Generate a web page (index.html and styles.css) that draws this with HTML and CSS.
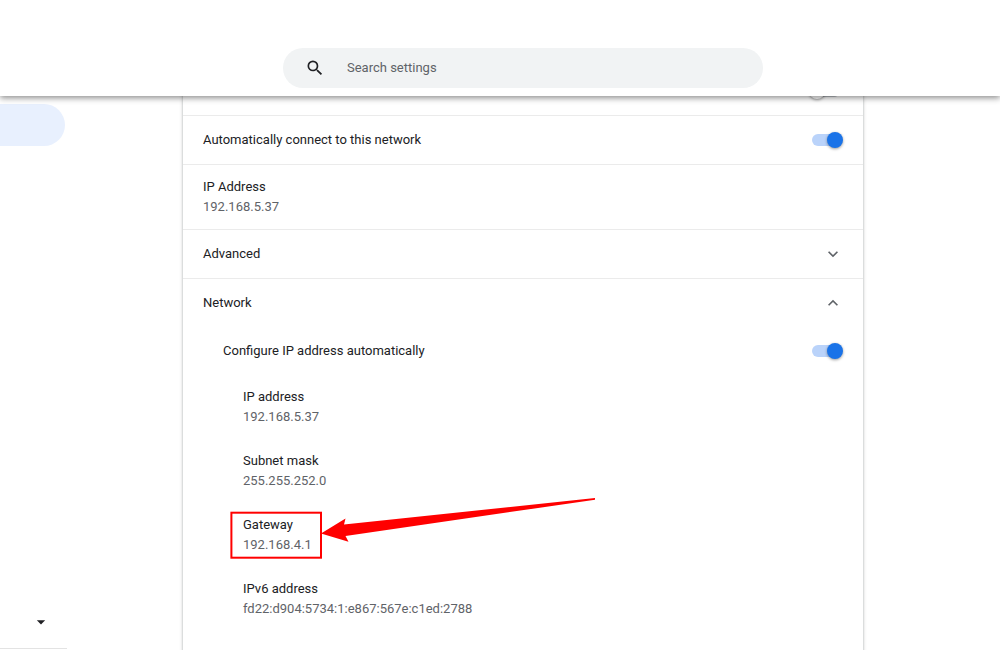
FILE: index.html
```html
<!DOCTYPE html>
<html lang="en">
<head>
    <meta charset="UTF-8">
    <meta name="viewport" content="width=device-width, initial-scale=1.0">
    <title>Settings</title>
    <link rel="stylesheet" href="styles.css">
</head>
<body>
    <header class="toolbar">
        <label class="search">
            <svg class="icon" viewBox="0 0 24 24" aria-hidden="true"><path d="M15.5 14h-.79l-.28-.27A6.47 6.47 0 0 0 16 9.5 6.5 6.5 0 1 0 9.5 16c1.61 0 3.09-.59 4.23-1.57l.27.28v.79l5 4.99L20.49 19l-4.99-5zm-6 0C7.01 14 5 11.99 5 9.5S7.01 5 9.5 5 14 7.01 14 9.5 11.99 14 9.5 14z"/></svg>
            <input type="search" placeholder="Search settings" aria-label="Search settings">
        </label>
    </header>

    <div class="container">
        <nav class="menu">
            <a class="menu-item" href="#network" aria-label="Network"></a>
            <button class="menu-toggle" aria-label="Show more">
                <svg class="icon" viewBox="0 0 24 24" aria-hidden="true"><path d="M7 10l5 5 5-5z"/></svg>
            </button>
        </nav>

        <main class="content">
            <section class="card" id="network">
                <div class="row">
                    <input class="toggle" type="checkbox" aria-label="Prefer this network">
                </div>
                <div class="row line">
                    <label for="auto-connect">Automatically connect to this network</label>
                    <input class="toggle" type="checkbox" id="auto-connect" checked>
                </div>
                <div class="row line two-line">
                    <div>
                        <div>IP Address</div>
                        <div class="secondary">192.168.5.37</div>
                    </div>
                </div>
                <button class="row line">
                    <span>Advanced</span>
                    <svg class="icon chevron" viewBox="0 0 24 24" aria-hidden="true"><path d="M7.41 8.59L12 13.17l4.59-4.58L18 10l-6 6-6-6z"/></svg>
                </button>
                <button class="row line" aria-expanded="true">
                    <span>Network</span>
                    <svg class="icon chevron" viewBox="0 0 24 24" aria-hidden="true"><path d="M7.41 15.41L12 10.83l4.59 4.58L18 14l-6-6-6 6z"/></svg>
                </button>
                <div class="row indent">
                    <label for="auto-ip">Configure IP address automatically</label>
                    <input class="toggle" type="checkbox" id="auto-ip" checked>
                </div>
                <div class="row two-line indent-more">
                    <div>
                        <div>IP address</div>
                        <div class="secondary">192.168.5.37</div>
                    </div>
                </div>
                <div class="row two-line indent-more">
                    <div>
                        <div>Subnet mask</div>
                        <div class="secondary">255.255.252.0</div>
                    </div>
                </div>
                <div class="row two-line indent-more">
                    <div>
                        <div>Gateway</div>
                        <div class="secondary">192.168.4.1</div>
                    </div>
                    <svg class="callout" viewBox="0 0 368 66" aria-hidden="true">
                        <rect x="1.4" y="17.7" width="89.6" height="45" fill="none" stroke="#f00" stroke-width="2"/>
                        <path fill="#f00" d="M91 38.5L115.5 23.5L114 29.5L365 3V4.7L115.5 41L118.5 46.8Z"/>
                    </svg>
                </div>
                <div class="row two-line indent-more">
                    <div>
                        <div>IPv6 address</div>
                        <div class="secondary">fd22:d904:5734:1:e867:567e:c1ed:2788</div>
                    </div>
                </div>
            </section>
        </main>
    </div>
</body>
</html>
```
FILE: styles.css
```css
* {
    box-sizing: border-box;
}
body {
    display: flex;
    flex-direction: column;
    height: 100vh;
    margin: 0;
    background: #fff;
    color: #202124;
    font-family: Roboto, sans-serif;
    font-size: 13px;
    line-height: 20px;
}
button, input {
    margin: 0;
    border: none;
    background: none;
    color: inherit;
    font: inherit;
}
.icon {
    flex: none;
    width: 20px;
    height: 20px;
    fill: #202124;
}

/* Toolbar */
.toolbar {
    z-index: 1;
    display: flex;
    justify-content: center;
    padding: 48px 0 8px 46px;
    background: #fff;
    box-shadow: 0 2px 6px rgba(0, 0, 0, 0.45);
}
.search {
    display: flex;
    align-items: center;
    gap: 22px;
    width: 100%;
    max-width: 480px;
    height: 40px;
    padding: 0 22px;
    border-radius: 20px;
    background: #f1f3f4;
}
.search input {
    flex: 1;
    padding: 0;
    outline: none;
}
.search input::placeholder {
    color: #5f6368;
}

.container {
    display: flex;
    flex: 1;
    min-height: 0;
    overflow: hidden;
}

/* Side menu */
.menu {
    display: flex;
    flex-direction: column;
    justify-content: space-between;
    width: 67px;
    padding-top: 8px;
}
.menu-item {
    height: 42px;
    margin-right: 2px;
    border-radius: 0 21px 21px 0;
    background: #e8f0fe;
}
.menu-toggle {
    display: flex;
    justify-content: flex-end;
    padding: 16px;
    border-bottom: 1px solid #e3e3e3;
    margin-bottom: 1px;
}

/* Settings card */
.content {
    display: flex;
    flex: 1;
    justify-content: center;
    align-items: flex-start;
    padding-right: 21px;
}
.card {
    width: 100%;
    max-width: 680px;
    min-height: 100vh;
    margin-top: -29px;
    box-shadow: 0 1px 2px rgba(60, 64, 67, 0.3), 0 1px 3px 1px rgba(60, 64, 67, 0.15);
}
.row {
    position: relative;
    display: flex;
    align-items: center;
    width: 100%;
    min-height: 48px;
    padding: 0 20px;
    text-align: left;
}
.line {
    min-height: 49px;
    border-top: 1px solid #ebebeb;
}
.two-line {
    min-height: 64px;
}
.line.two-line {
    min-height: 65px;
}
.indent {
    padding-left: 40px;
}
.indent-more {
    padding-left: 60px;
}
.secondary {
    color: #5f6368;
}
.chevron {
    margin-left: auto;
    fill: #5f6368;
}

/* Toggle switch */
.toggle {
    display: flex;
    align-items: center;
    width: 34px;
    height: 16px;
    margin-left: auto;
    appearance: none;
}
.toggle::before {
    content: "";
    width: 28px;
    height: 12px;
    margin-left: 3px;
    border-radius: 6px;
    background: #bdc1c6;
}
.toggle::after {
    content: "";
    width: 16px;
    height: 16px;
    margin-left: -31px;
    border-radius: 50%;
    background: #fff;
    box-shadow: 0 1px 3px rgba(0, 0, 0, 0.4);
}
.toggle:checked::before {
    background: #bad3fa;
}
.toggle:checked::after {
    margin-left: -13px;
    background: #1a73e8;
}

/* Box and arrow drawn over the gateway row */
.callout {
    position: absolute;
    top: -8px;
    left: 47px;
    width: 368px;
    height: 66px;
}
```
